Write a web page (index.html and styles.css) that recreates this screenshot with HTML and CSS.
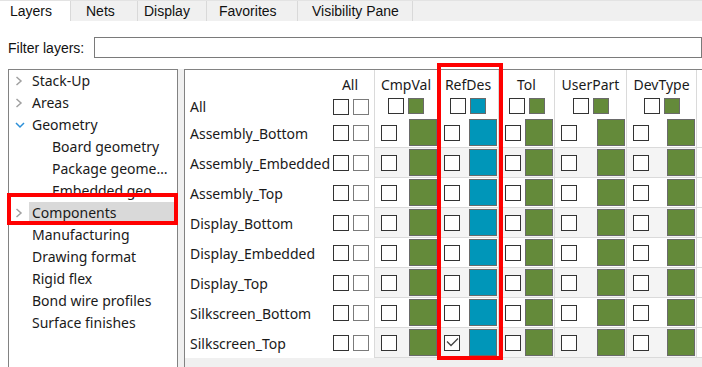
FILE: index.html
```html
<!DOCTYPE html>
<html>
<head>
    <meta charset="utf-8"/>
    <link rel="stylesheet" href="styles.css">
</head>
<body>
<div class="tabs">
    <div class="tab active">Layers</div>
    <div class="tab">Nets</div>
    <div class="tab">Display</div>
    <div class="tab">Favorites</div>
    <div class="tab">Visibility Pane</div>
</div>
<div class="filter">
    <label for="filter">Filter layers:</label>
    <input type="text" id="filter">
</div>
<div class="panes">
    <ul class="tree">
        <li><span class="arrow"><svg width="8" height="10"><polyline points="1.5,1 6,5 1.5,9" class="closed"/></svg></span><span class="text">Stack-Up</span></li>
        <li><span class="arrow"><svg width="8" height="10"><polyline points="1.5,1 6,5 1.5,9" class="closed"/></svg></span><span class="text">Areas</span></li>
        <li><span class="arrow"><svg width="10" height="7"><polyline points="1,1 5,5 9,1" class="open"/></svg></span><span class="text">Geometry</span></li>
        <li class="child"><span class="text">Board geometry</span></li>
        <li class="child"><span class="text">Package geometry</span></li>
        <li class="child"><span class="text">Embedded geometry</span></li>
        <li class="selected"><span class="arrow"><svg width="8" height="10"><polyline points="1.5,1 6,5 1.5,9" class="closed"/></svg></span><span class="text">Components</span></li>
        <li><span class="arrow"></span><span class="text">Manufacturing</span></li>
        <li><span class="arrow"></span><span class="text">Drawing format</span></li>
        <li><span class="arrow"></span><span class="text">Rigid flex</span></li>
        <li><span class="arrow"></span><span class="text">Bond wire profiles</span></li>
        <li><span class="arrow"></span><span class="text">Surface finishes</span></li>
    </ul>
    <div class="splitter"></div>
    <div class="grid-pane">
        <div class="grid">
            <div class="row head">
                <div class="name">
                    <div class="all-top">All</div>
                    <div class="all-line"><span>All</span><span class="boxes"><i class="cb"></i><i class="cb dim"></i></span></div>
                </div>
                <div class="cell"><div class="title">CmpVal</div><div class="pair"><i class="cb"></i><i class="sw small"></i></div></div>
                <div class="cell"><div class="title">RefDes</div><div class="pair"><i class="cb"></i><i class="sw small blue"></i></div></div>
                <div class="cell"><div class="title">Tol</div><div class="pair"><i class="cb"></i><i class="sw small"></i></div></div>
                <div class="cell"><div class="title">UserPart</div><div class="pair"><i class="cb"></i><i class="sw small"></i></div></div>
                <div class="cell"><div class="title">DevType</div><div class="pair"><i class="cb"></i><i class="sw small"></i></div></div>
                <div class="cell end"></div>
            </div>
            <div class="row">
                <div class="name"><span>Assembly_Bottom</span><span class="boxes"><i class="cb"></i><i class="cb dim"></i></span></div>
                <div class="cell"><i class="cb"></i><i class="sw"></i></div>
                <div class="cell"><i class="cb"></i><i class="sw blue"></i></div>
                <div class="cell"><i class="cb"></i><i class="sw"></i></div>
                <div class="cell"><i class="cb"></i><i class="sw"></i></div>
                <div class="cell"><i class="cb"></i><i class="sw"></i></div>
                <div class="cell end"></div>
            </div>
            <div class="row alt">
                <div class="name"><span>Assembly_Embedded</span><span class="boxes"><i class="cb"></i><i class="cb dim"></i></span></div>
                <div class="cell"><i class="cb"></i><i class="sw"></i></div>
                <div class="cell"><i class="cb"></i><i class="sw blue"></i></div>
                <div class="cell"><i class="cb"></i><i class="sw"></i></div>
                <div class="cell"><i class="cb"></i><i class="sw"></i></div>
                <div class="cell"><i class="cb"></i><i class="sw"></i></div>
                <div class="cell end"></div>
            </div>
            <div class="row">
                <div class="name"><span>Assembly_Top</span><span class="boxes"><i class="cb"></i><i class="cb dim"></i></span></div>
                <div class="cell"><i class="cb"></i><i class="sw"></i></div>
                <div class="cell"><i class="cb"></i><i class="sw blue"></i></div>
                <div class="cell"><i class="cb"></i><i class="sw"></i></div>
                <div class="cell"><i class="cb"></i><i class="sw"></i></div>
                <div class="cell"><i class="cb"></i><i class="sw"></i></div>
                <div class="cell end"></div>
            </div>
            <div class="row alt">
                <div class="name"><span>Display_Bottom</span><span class="boxes"><i class="cb"></i><i class="cb dim"></i></span></div>
                <div class="cell"><i class="cb"></i><i class="sw"></i></div>
                <div class="cell"><i class="cb"></i><i class="sw blue"></i></div>
                <div class="cell"><i class="cb"></i><i class="sw"></i></div>
                <div class="cell"><i class="cb"></i><i class="sw"></i></div>
                <div class="cell"><i class="cb"></i><i class="sw"></i></div>
                <div class="cell end"></div>
            </div>
            <div class="row">
                <div class="name"><span>Display_Embedded</span><span class="boxes"><i class="cb"></i><i class="cb dim"></i></span></div>
                <div class="cell"><i class="cb"></i><i class="sw"></i></div>
                <div class="cell"><i class="cb"></i><i class="sw blue"></i></div>
                <div class="cell"><i class="cb"></i><i class="sw"></i></div>
                <div class="cell"><i class="cb"></i><i class="sw"></i></div>
                <div class="cell"><i class="cb"></i><i class="sw"></i></div>
                <div class="cell end"></div>
            </div>
            <div class="row alt">
                <div class="name"><span>Display_Top</span><span class="boxes"><i class="cb"></i><i class="cb dim"></i></span></div>
                <div class="cell"><i class="cb"></i><i class="sw"></i></div>
                <div class="cell"><i class="cb"></i><i class="sw blue"></i></div>
                <div class="cell"><i class="cb"></i><i class="sw"></i></div>
                <div class="cell"><i class="cb"></i><i class="sw"></i></div>
                <div class="cell"><i class="cb"></i><i class="sw"></i></div>
                <div class="cell end"></div>
            </div>
            <div class="row">
                <div class="name"><span>Silkscreen_Bottom</span><span class="boxes"><i class="cb"></i><i class="cb dim"></i></span></div>
                <div class="cell"><i class="cb"></i><i class="sw"></i></div>
                <div class="cell"><i class="cb"></i><i class="sw blue"></i></div>
                <div class="cell"><i class="cb"></i><i class="sw"></i></div>
                <div class="cell"><i class="cb"></i><i class="sw"></i></div>
                <div class="cell"><i class="cb"></i><i class="sw"></i></div>
                <div class="cell end"></div>
            </div>
            <div class="row alt">
                <div class="name"><span>Silkscreen_Top</span><span class="boxes"><i class="cb"></i><i class="cb dim"></i></span></div>
                <div class="cell"><i class="cb"></i><i class="sw"></i></div>
                <div class="cell"><i class="cb checked"><svg width="14" height="14"><polyline points="2,5.5 6,9.5 13,2.5"/></svg></i><i class="sw blue"></i></div>
                <div class="cell"><i class="cb"></i><i class="sw"></i></div>
                <div class="cell"><i class="cb"></i><i class="sw"></i></div>
                <div class="cell"><i class="cb"></i><i class="sw"></i></div>
                <div class="cell end"></div>
            </div>
        </div>
    </div>
</div>
<div class="mark mark-tree"></div>
<div class="mark mark-col"></div>
</body>
</html>
```

FILE: styles.css
```css
* {
    box-sizing: border-box;
}

body {
    margin: 0;
    width: 702px;
    height: 367px;
    overflow: hidden;
    position: relative;
    background: #fff;
    font-family: "Noto Sans", sans-serif;
    font-size: 14px;
    color: #1a1a1a;
}

/* tab strip */
.tabs {
    display: flex;
    height: 21px;
    background: #f0f0f0;
    border-top: 1px solid #e3e3e3;
    font: 14px "Liberation Sans", sans-serif;
}

.tab {
    width: 67px;
    padding-left: 15px;
    line-height: 20px;
    border-left: 1px solid #d9d9d9;
    color: #111;
}

.tab.active {
    width: 70px;
    padding-left: 10px;
    background: #fff;
    border-left: 0;
}

.tab:nth-child(3) { width: 69px; padding-left: 6px; }
.tab:nth-child(4) { width: 91px; padding-left: 12px; }
.tab:nth-child(5) { width: 116px; padding-left: 14px; border-right: 1px solid #d9d9d9; }

/* filter */
.filter {
    display: flex;
    align-items: center;
    margin: 16px 0 0 8px;
    font: 14px "Liberation Sans", sans-serif;
    color: #111;
}

.filter label {
    width: 86px;
}

.filter input {
    flex: 1;
    height: 21px;
    margin: 0;
    padding: 0 4px;
    border: 1px solid #7a7a7a;
    outline: 0;
}

/* panes */
.panes {
    display: flex;
    height: 298px;
    margin: 11px 0 0 8px;
}

.tree {
    width: 170px;
    margin: 0;
    padding: 0;
    list-style: none;
    border: 1px solid #828282;
    border-bottom: 0;
}

.tree li {
    display: flex;
    align-items: center;
    height: 22px;
    white-space: nowrap;
}

.tree .arrow {
    width: 23px;
    display: flex;
    align-items: center;
    padding-left: 6px;
}

.tree li.child {
    padding-left: 43px;
}

.tree .text {
    overflow: hidden;
    text-overflow: ellipsis;
    padding: 0 3px;
    margin-left: -3px;
    line-height: 22px;
}

.tree li.child .text {
    width: 123px;
}

.tree li.selected .text {
    flex: 1;
    margin-right: 2px;
    background: #d9d9d9;
}

.tree polyline {
    fill: none;
    stroke-width: 1.5;
}

.tree .closed {
    stroke: #a0a0a0;
}

.tree .open {
    stroke: #2b8fd8;
}

.splitter {
    width: 6px;
    background: #f0f0f0;
}

.grid-pane {
    flex: 1;
    border-top: 1px solid #828282;
    border-left: 1px solid #828282;
    background: #f0f0f0;
    overflow: hidden;
}

/* layer grid */
.grid {
    display: grid;
    grid-template-columns: 189px 63px 61px 56px 72px 70px 1fr;
    grid-template-rows: 48px repeat(8, 30px);
    background: #fff;
}

.row {
    display: contents;
}

.name {
    display: flex;
    align-items: center;
    justify-content: space-between;
    padding: 0 5px;
    white-space: nowrap;
}

.boxes, .pair {
    display: flex;
    gap: 4px;
}

.head .name {
    flex-direction: column;
    align-items: stretch;
    justify-content: flex-start;
    padding-top: 6px;
}

.all-top {
    align-self: flex-end;
    width: 36px;
    text-align: center;
    line-height: 18px;
    margin-right: 1px;
}

.all-line {
    display: flex;
    align-items: center;
    justify-content: space-between;
    margin-top: 3px;
}

.cell {
    display: flex;
    align-items: center;
    justify-content: space-between;
    padding: 0 1px 0 6px;
    border-left: 1px solid #dadada;
    border-bottom: 1px solid #dadada;
}

.cell:nth-child(2) {
    padding-right: 0;
}

.row.alt .cell {
    background: #f4f4f4;
}

.row.alt .cell.end {
    background: #fff;
}

.head .cell {
    flex-direction: column;
    justify-content: flex-start;
    padding: 6px 0 0;
    border-bottom: 0;
}

.title {
    line-height: 18px;
    margin-bottom: 4px;
}

.cb {
    display: block;
    width: 16px;
    height: 16px;
    border: 1px solid #333;
    background: #fff;
}

.cb.dim {
    border-color: #7b7b7b;
}

.cb.checked svg {
    display: block;
}

.cb.checked polyline {
    fill: none;
    stroke: #444;
    stroke-width: 1.3;
}

.sw {
    display: block;
    width: 28px;
    height: 27px;
    background: #648a3a;
    border: 1px solid #6a6a6a;
}

.sw.small {
    width: 16px;
    height: 16px;
}

.sw.blue {
    background: #0096b9;
}

/* highlight marks */
.mark {
    position: absolute;
    border: 4px solid #ff0000;
}

.mark-tree {
    left: 7px;
    top: 193px;
    width: 171px;
    height: 32px;
}

.mark-col {
    left: 437px;
    top: 63px;
    width: 66px;
    height: 297px;
}
```
